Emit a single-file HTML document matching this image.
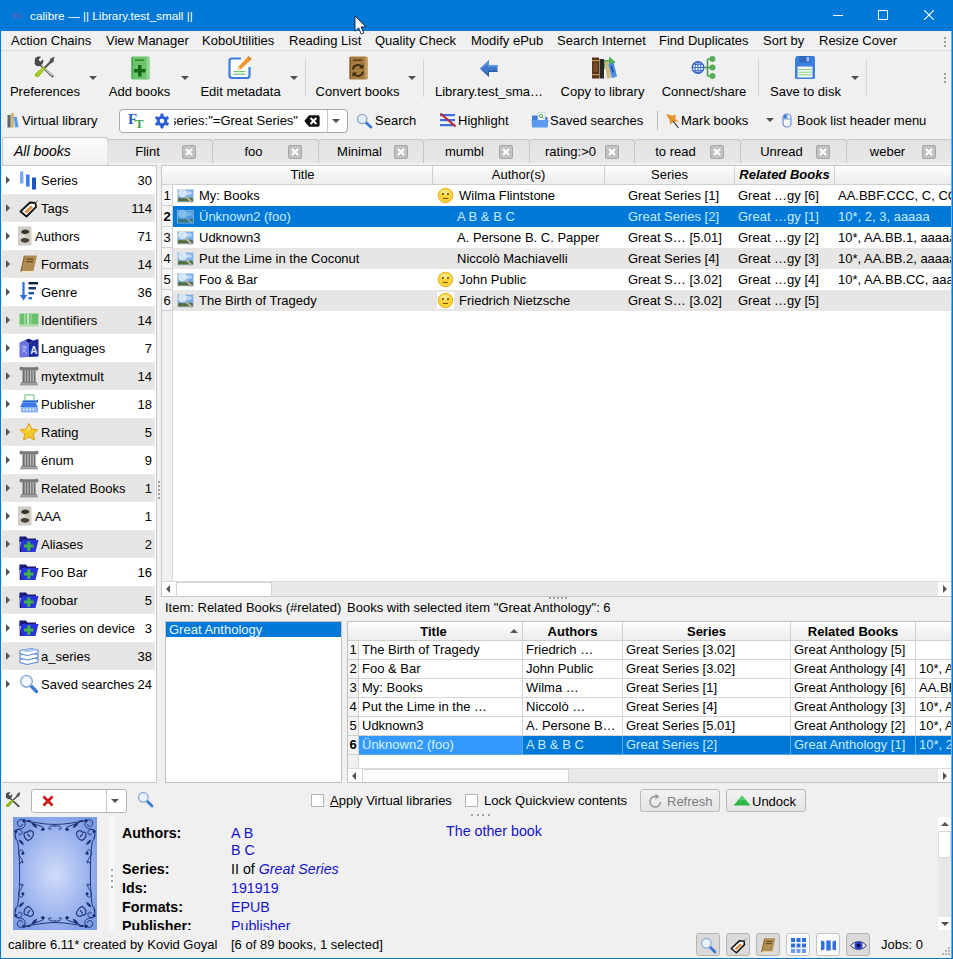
<!DOCTYPE html>
<html><head><meta charset="utf-8"><title>calibre</title>
<style>
*{box-sizing:border-box;margin:0;padding:0}
html,body{width:953px;height:959px;overflow:hidden;background:#f0f0f0}
body{font-family:"Liberation Sans","DejaVu Sans",sans-serif;font-size:13px;color:#000;position:relative}
.a{position:absolute;white-space:nowrap}
.t{position:absolute;white-space:nowrap;line-height:16px;height:16px}
#titlebar{left:0;top:0;width:953px;height:31px;background:#0078d7}
#bl{z-index:50;left:0;top:31px;width:1px;height:928px;background:#0078d7}
#br{z-index:50;left:951px;top:31px;width:2px;height:928px;background:linear-gradient(90deg,#6eb0e6 0 1px,#0078d7 1px 2px)}
#bb{z-index:50;left:0;top:958px;width:953px;height:1px;background:#0078d7}
.dots{width:2px;height:11px;background:repeating-linear-gradient(#a0a0a0 0 2px,transparent 2px 4px)}

.tl{position:absolute;white-space:nowrap;line-height:16px;height:16px;top:84px;text-align:center}
.arr{position:absolute;width:0;height:0;border-left:4px solid transparent;border-right:4px solid transparent;border-top:4px solid #505050}
.vsep{position:absolute;width:1px;background:#d4d4d4}

#sbox{left:119px;top:109px;width:229px;height:24px;background:#fff;border:1px solid #a8a8a8;border-radius:4px}
.tab{position:absolute;top:139px;height:24px;width:106px;background:linear-gradient(#e2e2e2,#e8e8e8);border:1px solid #c6c6c6;border-left:none;border-bottom:none;border-radius:3px 3px 0 0}
.tab .tt{position:absolute;left:6px;width:69px;top:4px;text-align:center;line-height:16px}
.tab .cb{position:absolute;left:75px;top:5px;width:14px;height:14px;background:#c2c2c2;border:1px solid #a6a6a6;border-radius:2px}

#tb{left:2px;top:165px;width:155px;height:618px;background:#fff;border:1px solid #c8c8c8;border-left:none}
.tr{position:absolute;left:0;width:153px;height:28px}
.tr.g{background:#e7e6e4}
.tr .ar{position:absolute;left:4px;top:10px;width:0;height:0;border-top:4px solid transparent;border-bottom:4px solid transparent;border-left:4px solid #555}
.tr .nm{position:absolute;left:39px;top:7px;line-height:16px;white-space:nowrap}
.tr .ct{position:absolute;right:3px;top:7px;line-height:16px}
.tr svg{position:absolute;left:17px;top:4px}

#bl2{left:161px;top:165px;width:791px;height:432px;background:#fff;border:1px solid #c8c8c8;border-right:none;overflow:hidden}
.hd{position:absolute;top:0;height:19px;background:linear-gradient(#ffffff,#f4f4f4 50%,#ececec);border-right:1px solid #d0d0d0;border-bottom:1px solid #d0d0d0;text-align:center;line-height:17px;white-space:nowrap;overflow:hidden}
.br{position:absolute;left:11px;width:779px;height:21px}
.br.g{background:#e7e6e4}
.br.sel{background:#0078d7;color:#c8ecff}
.br span{position:absolute;top:2px;line-height:17px;white-space:nowrap}
.rn{position:absolute;left:0;width:11px;height:21px;background:#f6f6f6;border-right:1px solid #d0d0d0;border-bottom:1px solid #d0d0d0;text-align:center;line-height:21px;font-size:13px;white-space:nowrap}
.pic{position:absolute;left:4px;top:3px}
.sel .pic{opacity:.62}
.emo{position:absolute;left:264px;top:2px;width:17px;height:17px;background:#fff}
.sbb{position:absolute;background:#e8e8e8}
.sbt{position:absolute;background:#fff;border:1px solid #d4d4d4}

#qlist{left:165px;top:621px;width:177px;height:162px;background:#fff;border:1px solid #c0c0c0}
#qtab{left:347px;top:621px;width:605px;height:162px;background:#fff;border:1px solid #c0c0c0;border-right:none;overflow:hidden}
.qh{position:absolute;top:0;height:19px;background:linear-gradient(#ffffff,#f4f4f4 50%,#ececec);border-right:1px solid #cfcfcf;border-bottom:1px solid #cfcfcf;text-align:center;line-height:19px;font-weight:bold;white-space:nowrap}
.qr{position:absolute;left:0;width:604px;height:19px}
.qc{position:absolute;top:0;height:19px;border-right:1px solid #d4d4d4;border-bottom:1px solid #d4d4d4;line-height:18px;padding-left:3px;white-space:nowrap;overflow:hidden}
.qr.sel .qc{background:#0078d7;color:#c8ecff;border-color:#5aa8e8}
.qn{position:absolute;left:0;top:0;width:11px;height:19px;background:#f4f4f4;border-right:1px solid #cfcfcf;border-bottom:1px solid #cfcfcf;text-align:center;line-height:18px}

.cbx{position:absolute;width:13px;height:13px;background:#fff;border:1px solid #b4b4b4}
.btn{position:absolute;height:23px;border:1px solid #b9b9b9;border-radius:3px;background:linear-gradient(#f2f2f2,#e4e4e4)}
.sbtn{position:absolute;top:933px;width:24px;height:23px;border:1px solid #b4b4b4;border-radius:3px;background:#dadada}
.sbtn.w{background:#fbfbfb;border-color:#c4c4c4}
.sbtn svg{position:absolute;left:3px;top:3px}
.dl{position:absolute;left:122px;font-weight:bold;font-size:14.25px;line-height:16px;white-space:nowrap}
.dv{position:absolute;left:231px;font-size:14.25px;line-height:16px;white-space:nowrap;color:#1414c8}
</style></head><body>
<div class="a" id="titlebar">
<svg class="a" style="left:10px;top:9px" width="14" height="13" viewBox="0 0 14 13"><path d="M1 6.5 L6.5 1.5 V4.5 H13 V8.5 H6.5 V11.5 Z" fill="#4a66b8" opacity="0.7"/></svg>
<div class="t" style="left:30px;top:8px;color:#fff;font-size:11.75px">calibre — || Library.test_small ||</div>
<svg class="a" style="left:833px;top:15px" width="10" height="1"><rect width="10" height="1" fill="#fff"/></svg>
<svg class="a" style="left:878px;top:10px" width="10" height="10"><rect x="0.5" y="0.5" width="9" height="9" fill="none" stroke="#fff" stroke-width="1"/></svg>
<svg class="a" style="left:924px;top:10px" width="10" height="10"><path d="M0 0 L10 10 M10 0 L0 10" stroke="#fff" stroke-width="1.1"/></svg>
<svg class="a" style="left:354px;top:15px" width="14" height="21" viewBox="0 0 14 21"><path d="M1 1 V16.2 L4.6 12.9 L7.2 19 L9.8 17.9 L7.2 11.9 H12 Z" fill="#fff" stroke="#0a1a3a" stroke-width="0.9"/></svg>
</div>
<div class="a" id="bl"></div><div class="a" id="br"></div><div class="a" id="bb"></div>
<div class="a" style="left:1px;top:50px;width:950px;height:1px;background:#dcdcdc"></div>
<div class="t" style="left:11px;top:33px">Action Chains</div>
<div class="t" style="left:106px;top:33px">View Manager</div>
<div class="t" style="left:202px;top:33px">KoboUtilities</div>
<div class="t" style="left:289px;top:33px">Reading List</div>
<div class="t" style="left:375px;top:33px">Quality Check</div>
<div class="t" style="left:471px;top:33px">Modify ePub</div>
<div class="t" style="left:557px;top:33px">Search Internet</div>
<div class="t" style="left:659px;top:33px">Find Duplicates</div>
<div class="t" style="left:763px;top:33px">Sort by</div>
<div class="t" style="left:819px;top:33px">Resize Cover</div>
<div class="a dots" style="left:944px;top:37px"></div>

<svg class="a" style="left:32px;top:55px" width="25" height="25" viewBox="0 0 25 25">
<path d="M3 3.5 C4.5 1.5 7.5 1.2 9 2 L6.5 4.8 L8.3 6.8 L11 4.2 C12 6.5 11 8.8 9.5 9.6 L21.5 20.5 C22.5 21.5 21 23.3 19.8 22.3 L8 11 C5.5 12 3.2 10.5 2.6 8.5 Z" fill="#4a4a4a"/>
<path d="M9.5 10 L20.5 21.2" stroke="#d8d8d8" stroke-width="1.2" fill="none"/>
<path d="M22.5 1.5 L18.5 3.5 L16.8 7.2 L11.5 12.5 L13 14 L18.3 8.7 L21.5 7 Z" fill="#555"/>
<path d="M11.8 11.6 L13.8 13.6 L7 21.5 C5 23.5 1.5 21 3.3 18.6 Z" fill="#8fb51a"/>
<path d="M10.8 12.4 L12.8 14.4 L6.6 21 C5 22.3 3 20.8 4 19.2 Z" fill="#a6cc2a"/>
</svg>
<svg class="a" style="left:131px;top:56px" width="19" height="24" viewBox="0 0 19 24">
<path d="M2 0.5 H17 Q18.5 0.5 18.5 2 V22 Q18.5 23.5 17 23.5 H2 Q0.5 23.5 0.5 22 V2 Q0.5 0.5 2 0.5 Z" fill="#6cc56c"/>
<rect x="15.5" y="1" width="3" height="22" fill="#8fd88f"/>
<rect x="0.5" y="1" width="1.5" height="22" fill="#4aa54a"/>
<rect x="4" y="3.5" width="9" height="1.3" fill="#1e7a1e"/>
<path d="M7 9 H10.5 V13 H14.5 V16.5 H10.5 V20.5 H7 V16.5 H3 V13 H7 Z" fill="#156b15"/>
</svg>
<svg class="a" style="left:228px;top:55px" width="25" height="25" viewBox="0 0 25 25">
<path d="M13 3.5 H4 Q1.5 3.5 1.5 6 V20.5 Q1.5 23 4 23 H19 Q21.5 23 21.5 20.5 V12" fill="#fff" stroke="#3a7ce0" stroke-width="2.2"/>
<rect x="5.5" y="16" width="12" height="1.2" fill="#6fc36f"/><rect x="5.5" y="18.7" width="12" height="1.2" fill="#6fc36f"/>
<path d="M20.5 1.2 L23.6 4 L13 14.2 L9.5 15.2 L10.3 11.7 Z" fill="#f0962e"/>
<path d="M9.5 15.2 L10.3 11.7 L13 14.2 Z" fill="#f6d7a8"/>
<path d="M20.5 1.2 L23.6 4 L22.4 5.2 L19.3 2.4 Z" fill="#d67a1a"/>
</svg>
<svg class="a" style="left:349px;top:56px" width="19" height="24" viewBox="0 0 19 24">
<path d="M2 0.5 H17 Q18.5 0.5 18.5 2 V22 Q18.5 23.5 17 23.5 H2 Q0.5 23.5 0.5 22 V2 Q0.5 0.5 2 0.5 Z" fill="#a67c3e"/>
<rect x="15.8" y="1" width="2.7" height="22" fill="#c39a5c"/>
<rect x="0.5" y="1" width="1.5" height="22" fill="#87622c"/>
<rect x="4" y="3.5" width="9" height="1.3" fill="#4a3512"/>
<path d="M4 13.5 A5 5 0 0 1 13 11" fill="none" stroke="#3d2c10" stroke-width="2"/>
<path d="M14.5 8 V12.5 H10 Z" fill="#3d2c10"/>
<path d="M14 15.5 A5 5 0 0 1 5 18" fill="none" stroke="#3d2c10" stroke-width="2"/>
<path d="M3.5 21 V16.5 H8 Z" fill="#3d2c10"/>
</svg>
<svg class="a" style="left:479px;top:59px" width="20" height="19" viewBox="0 0 20 19">
<path d="M1 9.5 L10 1 V6 H18.5 V13 H10 V18 Z" fill="#3f78c8"/>
<path d="M1 9.5 L10 1 V6 H18.5 V8 H9 V5 L3 9.5 Z" fill="#5b93de"/>
<path d="M1 9.5 L10 18 V13 H18.5 V11.5 H9 V15 Z" fill="#2c5fa8"/>
</svg>
<svg class="a" style="left:591px;top:55px" width="26" height="25" viewBox="0 0 26 25">
<path d="M11 5 H18 V1.5 L24.5 7 L18 12.5 V9 H14 V14 H11 Z" fill="#4fb04f"/>
<rect x="1" y="2.5" width="7" height="21" fill="#5a3418"/>
<rect x="1" y="5" width="7" height="1.2" fill="#c89a50"/><rect x="1" y="19" width="7" height="1.2" fill="#c89a50"/>
<rect x="2.2" y="8" width="4.6" height="9" fill="#7a4a22"/>
<rect x="8.5" y="4" width="4.5" height="19.5" fill="#2a2a2a"/>
<path d="M13.5 7 L17.8 6.3 L20.3 22.8 L16 23.5 Z" fill="#cdb98a"/>
<path d="M17.5 9 L22.5 7.3 L26 21.5 L21 23.3 Z" fill="#4a8ee0"/>
<path d="M19.5 11 L21 10.5 L22.8 17 L21.3 17.5 Z" fill="#1d4fa0"/>
</svg>
<svg class="a" style="left:691px;top:55px" width="27" height="25" viewBox="0 0 27 25">
<path d="M12 12.5 H16.5 M16.5 4 V21 M16.5 4 H20 M16.5 12.5 H20 M16.5 21 H20" stroke="#4a9a4a" stroke-width="1.6" fill="none"/>
<circle cx="21.5" cy="4" r="3" fill="#55b055"/><circle cx="21.5" cy="12.5" r="3" fill="#55b055"/><circle cx="21.5" cy="21" r="3" fill="#55b055"/>
<circle cx="7" cy="12.5" r="5.8" fill="#e8f0ff" stroke="#2f62c8" stroke-width="1.4"/>
<path d="M1.2 12.5 H12.8 M7 6.7 V18.3 M2.3 9.3 H11.7 M2.3 15.7 H11.7" stroke="#2f62c8" stroke-width="0.9" fill="none"/>
<ellipse cx="7" cy="12.5" rx="2.8" ry="5.8" fill="none" stroke="#2f62c8" stroke-width="0.9"/>
</svg>
<svg class="a" style="left:794px;top:55px" width="22" height="25" viewBox="0 0 22 25">
<path d="M2.5 1 H19.5 Q21 1 21 2.5 V22.5 Q21 24 19.5 24 H2.5 Q1 24 1 22.5 V4 Z" fill="#3d7fdc"/>
<rect x="5.5" y="1" width="11" height="6.5" fill="#2f68c0"/>
<rect x="12.5" y="2" width="2.6" height="4.3" fill="#9cc2f5"/>
<rect x="3.5" y="11.5" width="15" height="11" fill="#f4f8f4"/>
<rect x="3.5" y="14" width="15" height="1" fill="#8fd08f"/><rect x="3.5" y="16.7" width="15" height="1" fill="#8fd08f"/><rect x="3.5" y="19.4" width="15" height="1" fill="#8fd08f"/>
</svg>
<div class="tl" style="left:1px;width:88px">Preferences</div>
<div class="tl" style="left:99px;width:81px">Add books</div>
<div class="tl" style="left:190px;width:101px">Edit metadata</div>
<div class="tl" style="left:307px;width:101px">Convert books</div>
<div class="tl" style="left:425px;width:128px">Library.test_sma…</div>
<div class="tl" style="left:551px;width:103px">Copy to library</div>
<div class="tl" style="left:652px;width:104px">Connect/share</div>
<div class="tl" style="left:760px;width:91px">Save to disk</div>
<div class="arr" style="left:89px;top:76px"></div>
<div class="arr" style="left:181px;top:76px"></div>
<div class="arr" style="left:290px;top:76px"></div>
<div class="arr" style="left:408px;top:76px"></div>
<div class="arr" style="left:851px;top:76px"></div>
<div class="vsep" style="left:305px;top:59px;height:38px"></div>
<div class="vsep" style="left:423px;top:59px;height:38px"></div>
<div class="vsep" style="left:758px;top:59px;height:38px"></div>
<div class="vsep" style="left:866px;top:59px;height:38px"></div>
<div class="a dots" style="left:944px;top:73px"></div>

<svg class="a" style="left:7px;top:112px" width="12" height="16" viewBox="0 0 12 16"><rect x="0.5" y="3" width="3.2" height="12.5" fill="#5c646c"/><rect x="3.7" y="1" width="3.3" height="14.5" fill="#cdb87e"/><path d="M6.8 5 L9.6 4.4 L11.6 15 L8.2 15.5 Z" fill="#5b9bf0"/></svg>
<div class="t" style="left:22px;top:113px">Virtual library</div>
<div class="a" id="sbox"></div>
<div class="a" style="left:128px;top:111px;font-family:'Liberation Serif',serif;font-size:15px;font-weight:bold;color:#2a60c0;line-height:16px">F</div>
<div class="a" style="left:135px;top:116px;font-family:'Liberation Serif',serif;font-size:13px;font-weight:bold;color:#3fa050;line-height:16px">T</div>
<svg class="a" style="left:154px;top:113px" width="16" height="16" viewBox="0 0 16 16"><g fill="#2d5fd2"><circle cx="8" cy="8" r="5.3"/><g id="gt"><rect x="6.4" y="0.6" width="3.2" height="14.8" rx="0.8"/></g><rect x="6.4" y="0.6" width="3.2" height="14.8" rx="0.8" transform="rotate(60 8 8)"/><rect x="6.4" y="0.6" width="3.2" height="14.8" rx="0.8" transform="rotate(120 8 8)"/></g><circle cx="8" cy="8" r="2.3" fill="#fff"/></svg>
<div class="a" style="left:174px;top:110px;width:125px;height:22px;overflow:hidden"><div class="t" style="right:1px;top:3px">series:"=Great Series"</div></div>
<svg class="a" style="left:304px;top:115px" width="16" height="12" viewBox="0 0 16 12"><path d="M5 0.3 H14 Q15.6 0.3 15.6 2 V10 Q15.6 11.7 14 11.7 H5 L0.3 6 Z" fill="#111"/><path d="M6.6 3 L12.4 9 M12.4 3 L6.6 9" stroke="#fff" stroke-width="2"/></svg>
<div class="a" style="left:327px;top:110px;width:1px;height:22px;background:#c8c8c8"></div>
<div class="arr" style="left:332px;top:119px"></div>
<svg class="a" style="left:356px;top:113px" width="17" height="16" viewBox="0 0 17 16"><path d="M9.5 9 L15 14.2" stroke="#3b78d6" stroke-width="2.6" stroke-linecap="round"/><circle cx="6.2" cy="6" r="4.7" fill="#e4f0fb" stroke="#8fa6c0" stroke-width="1.3"/></svg>
<div class="t" style="left:375px;top:113px">Search</div>
<svg class="a" style="left:439px;top:112px" width="18" height="16" viewBox="0 0 18 16"><rect x="1" y="2" width="15" height="2.2" fill="#3c6fe0"/><rect x="1" y="7" width="15" height="2.2" fill="#3c6fe0"/><rect x="1" y="12" width="15" height="2.2" fill="#3c6fe0"/><path d="M1.5 1.5 L16.5 14.5" stroke="#c0202a" stroke-width="2"/></svg>
<div class="t" style="left:458px;top:113px">Highlight</div>
<svg class="a" style="left:531px;top:112px" width="18" height="16" viewBox="0 0 18 16"><path d="M1 3.5 H6 L7.5 5 H16.5 V15 H1 Z" fill="#3f7fd8"/><rect x="7" y="0.7" width="7" height="7.5" fill="#fff" stroke="#b0c4d8" stroke-width="0.6"/><circle cx="10" cy="3.8" r="1.6" fill="none" stroke="#3a9a3a" stroke-width="0.9"/><path d="M11 5 L12.8 6.8" stroke="#3a9a3a" stroke-width="0.9"/><path d="M0.5 8 H17.5 L16.5 15.5 H1.2 Z" fill="#5a9af0"/></svg>
<div class="t" style="left:550px;top:113px">Saved searches</div>
<div class="vsep" style="left:657px;top:111px;height:19px;background:#b8b8b8"></div>
<svg class="a" style="left:665px;top:113px" width="15" height="16" viewBox="0 0 15 16"><path d="M1 1 L7.5 2.8 L10.8 1.6 L10.2 5.5 L13.5 8.8 L8.5 8.6 L5.2 11.5 L4.6 7.2 Z" fill="#e8922a"/><path d="M8 8.2 L13.5 14.8" stroke="#444" stroke-width="1.2"/></svg>
<div class="t" style="left:681px;top:113px">Mark books</div>
<div class="arr" style="left:766px;top:118px;border-left-width:4px;border-right-width:4px"></div>
<svg class="a" style="left:782px;top:113px" width="10" height="15" viewBox="0 0 10 15"><rect x="1" y="1" width="8" height="13" rx="3.8" fill="#f4f8ff" stroke="#6a8fd0" stroke-width="1.2"/><path d="M1 6 H9 M5 1 V6" stroke="#6a8fd0" stroke-width="0.9"/><rect x="1.6" y="1.6" width="3.2" height="4" rx="1.5" fill="#3b78e0"/></svg>
<div class="t" style="left:797px;top:113px">Book list header menu</div>

<div class="a" style="left:2px;top:137px;width:106px;height:29px;background:linear-gradient(#fbfbfb,#f0f0f0);border:1px solid #c6c6c6;border-bottom:none;border-radius:3px 3px 0 0"></div>
<div class="t" style="left:14px;top:143px;font-style:italic;font-size:14px">All books</div>
<div class="tab" style="left:107px;width:106px"><div class="tt">Flint</div><div class="cb"><svg width="12" height="12" viewBox="0 0 12 12" style="display:block"><path d="M3 3 L9 9 M9 3 L3 9" stroke="#fff" stroke-width="2"/></svg></div></div>
<div class="tab" style="left:213px;width:106px"><div class="tt">foo</div><div class="cb"><svg width="12" height="12" viewBox="0 0 12 12" style="display:block"><path d="M3 3 L9 9 M9 3 L3 9" stroke="#fff" stroke-width="2"/></svg></div></div>
<div class="tab" style="left:319px;width:105px"><div class="tt">Minimal</div><div class="cb"><svg width="12" height="12" viewBox="0 0 12 12" style="display:block"><path d="M3 3 L9 9 M9 3 L3 9" stroke="#fff" stroke-width="2"/></svg></div></div>
<div class="tab" style="left:424px;width:106px"><div class="tt">mumbl</div><div class="cb"><svg width="12" height="12" viewBox="0 0 12 12" style="display:block"><path d="M3 3 L9 9 M9 3 L3 9" stroke="#fff" stroke-width="2"/></svg></div></div>
<div class="tab" style="left:530px;width:105px"><div class="tt">rating:>0</div><div class="cb"><svg width="12" height="12" viewBox="0 0 12 12" style="display:block"><path d="M3 3 L9 9 M9 3 L3 9" stroke="#fff" stroke-width="2"/></svg></div></div>
<div class="tab" style="left:635px;width:106px"><div class="tt">to read</div><div class="cb"><svg width="12" height="12" viewBox="0 0 12 12" style="display:block"><path d="M3 3 L9 9 M9 3 L3 9" stroke="#fff" stroke-width="2"/></svg></div></div>
<div class="tab" style="left:741px;width:106px"><div class="tt">Unread</div><div class="cb"><svg width="12" height="12" viewBox="0 0 12 12" style="display:block"><path d="M3 3 L9 9 M9 3 L3 9" stroke="#fff" stroke-width="2"/></svg></div></div>
<div class="tab" style="left:847px;width:105px"><div class="tt">weber</div><div class="cb"><svg width="12" height="12" viewBox="0 0 12 12" style="display:block"><path d="M3 3 L9 9 M9 3 L3 9" stroke="#fff" stroke-width="2"/></svg></div></div>

<div class="a" id="tb">
<div class="tr" style="top:0px"><div class="ar"></div><svg width="18" height="20" viewBox="0 0 18 20"><rect x="1" y="1.5" width="3.4" height="12" fill="#7aaaf5"/><rect x="7" y="4.5" width="3.6" height="12" fill="#3c7be8"/><rect x="13" y="7.5" width="4" height="12" fill="#1a55c8"/></svg><div class="nm">Series</div><div class="ct">30</div></div>
<div class="tr g" style="top:28px"><div class="ar"></div><svg width="20" height="20" viewBox="0 0 20 20"><path d="M1.5 13.5 L11 4.5 L16.5 5 L17 9 L7.5 18.5 Z" fill="#fff" stroke="#111" stroke-width="1.8" stroke-linejoin="round"/><path d="M5.5 13.5 L12 7.5 L14 9.5 L7.7 15.6 Z" fill="#e08a3c"/><path d="M15.5 5.5 L18.5 2.5" stroke="#555" stroke-width="1"/></svg><div class="nm">Tags</div><div class="ct">114</div></div>
<div class="tr" style="top:56px"><div class="ar"></div><svg width="14" height="20" viewBox="0 0 14 20" style="left:16px"><rect x="0" y="0.5" width="13.5" height="19" fill="#cfcbc6"/><path d="M3 6 C4 2.5 11 2.5 11.5 6 C10 8.5 4.5 9 3 6 Z" fill="#3a352e"/><path d="M2.5 14 C4 11 10 11.5 11.5 14 C10 17.5 4 17.5 2.5 14 Z" fill="#4a4236"/><path d="M1 9 H6 V12 H1 Z" fill="#e0ddd8"/></svg><div class="nm" style="left:33px">Authors</div><div class="ct">71</div></div>
<div class="tr g" style="top:84px"><div class="ar"></div><svg width="20" height="20" viewBox="0 0 20 20"><path d="M5 1.5 H18 L14.5 17 H1.5 Z" fill="#b08d52"/><path d="M1.5 17 H14.5 L14.2 18.8 H1.8 Z" fill="#efe4c8"/><path d="M5 1.5 L1.5 17 L2.3 18.8 L5.8 3 Z" fill="#8a6a34"/><rect x="7.5" y="4.5" width="7" height="1.3" fill="#6a4e20"/><rect x="7" y="7" width="7" height="1.3" fill="#6a4e20"/></svg><div class="nm">Formats</div><div class="ct">14</div></div>
<div class="tr" style="top:112px"><div class="ar"></div><svg width="20" height="22" viewBox="0 0 20 22" style="top:3px"><path d="M4.5 1 V17" stroke="#2d6be0" stroke-width="2.2"/><path d="M0.8 14 L4.5 19.5 L8.2 14 Z" fill="#2d6be0"/><rect x="9.5" y="1" width="9.5" height="2.4" fill="#0e1e40"/><rect x="9.5" y="6" width="7.5" height="2.4" fill="#14306a"/><rect x="9.5" y="11" width="5.5" height="2.4" fill="#1c4cb0"/><rect x="9.5" y="16" width="3.5" height="2.4" fill="#2d6be0"/></svg><div class="nm">Genre</div><div class="ct">36</div></div>
<div class="tr g" style="top:140px"><div class="ar"></div><svg width="20" height="20" viewBox="0 0 20 20"><rect x="0.5" y="3.5" width="19" height="11" fill="#6cc06c"/><rect x="5.5" y="3.5" width="0.8" height="11" fill="#d8f0d8"/><rect x="8.2" y="3.5" width="1.6" height="11" fill="#d8f0d8"/><rect x="11.5" y="3.5" width="0.8" height="11" fill="#b8e4b8"/><rect x="0.5" y="14.5" width="19" height="2" fill="#a8dca8"/></svg><div class="nm">Identifiers</div><div class="ct">14</div></div>
<div class="tr" style="top:168px"><div class="ar"></div><svg width="20" height="20" viewBox="0 0 20 20"><path d="M0.5 4.5 L6 2 L10 5.5 V19 L0.5 19.5 Z" fill="#6a74e0"/><path d="M10 5.5 L14 2.5 L19.5 1 V18.5 L10 19 Z" fill="#1a2a9a"/><path d="M6 2 L10 5.5 L14 2.5 L10 0.8 Z" fill="#0e1870"/><text x="11.3" y="15.5" font-family="Liberation Sans,sans-serif" font-size="10" font-weight="bold" fill="#dfe6ff">A</text><path d="M2.5 9 H7.5 M5 7.5 V9 M3 14.5 C5 13 6.5 11 7 9 M3.5 10.5 C4.5 12.5 6 14 8 14.8" stroke="#c8d0ff" stroke-width="0.9" fill="none"/></svg><div class="nm">Languages</div><div class="ct">7</div></div>
<div class="tr g" style="top:196px"><div class="ar"></div><svg width="20" height="20" viewBox="0 0 20 20"><path d="M0.5 2.5 C0.5 0.5 3 0.5 4 1.2 H16 C17 0.5 19.5 0.5 19.5 2.5 C19.5 4.5 17.5 4.8 16.5 4.3 H3.5 C2.5 4.8 0.5 4.5 0.5 2.5 Z" fill="#7a7a7a"/><rect x="3.5" y="4.3" width="13" height="11.7" fill="#6c6c6c"/><rect x="5.6" y="4.8" width="1.2" height="11" fill="#c4c4c4"/><rect x="8.3" y="4.8" width="1.2" height="11" fill="#c4c4c4"/><rect x="11" y="4.8" width="1.2" height="11" fill="#c4c4c4"/><rect x="13.6" y="4.8" width="1.2" height="11" fill="#c4c4c4"/><rect x="2" y="16" width="16" height="1.6" fill="#808080"/><rect x="1" y="17.6" width="18" height="1.8" fill="#9a9a9a"/></svg><div class="nm">mytextmult</div><div class="ct">14</div></div>
<div class="tr" style="top:224px"><div class="ar"></div><svg width="20" height="20" viewBox="0 0 20 20"><rect x="6" y="1" width="9" height="6" fill="#fff" stroke="#6cc06c" stroke-width="1"/><path d="M4 6.5 H17 L19 5.5 V8.5 H3 Z" fill="#2c62d8"/><path d="M3.5 8.5 H16.5 L19 13 H1 Z" fill="#3c78ea"/><rect x="2" y="13" width="17" height="5.5" rx="1" fill="#8ab4f8"/><path d="M4 15.5 H17" stroke="#fff" stroke-width="1.6" stroke-dasharray="1.6 1.6"/></svg><div class="nm">Publisher</div><div class="ct">18</div></div>
<div class="tr g" style="top:252px"><div class="ar"></div><svg width="20" height="20" viewBox="0 0 20 20"><path d="M10 1.5 L12.7 7 L18.8 7.8 L14.3 12 L15.5 18 L10 15 L4.5 18 L5.7 12 L1.2 7.8 L7.3 7 Z" fill="#f6c928" stroke="#e0a010" stroke-width="1" stroke-linejoin="round"/><path d="M10 3.5 L11.8 8 L7 8.3 Z" fill="#fbe88a"/></svg><div class="nm">Rating</div><div class="ct">5</div></div>
<div class="tr" style="top:280px"><div class="ar"></div><svg width="20" height="20" viewBox="0 0 20 20"><path d="M0.5 2.5 C0.5 0.5 3 0.5 4 1.2 H16 C17 0.5 19.5 0.5 19.5 2.5 C19.5 4.5 17.5 4.8 16.5 4.3 H3.5 C2.5 4.8 0.5 4.5 0.5 2.5 Z" fill="#7a7a7a"/><rect x="3.5" y="4.3" width="13" height="11.7" fill="#6c6c6c"/><rect x="5.6" y="4.8" width="1.2" height="11" fill="#c4c4c4"/><rect x="8.3" y="4.8" width="1.2" height="11" fill="#c4c4c4"/><rect x="11" y="4.8" width="1.2" height="11" fill="#c4c4c4"/><rect x="13.6" y="4.8" width="1.2" height="11" fill="#c4c4c4"/><rect x="2" y="16" width="16" height="1.6" fill="#808080"/><rect x="1" y="17.6" width="18" height="1.8" fill="#9a9a9a"/></svg><div class="nm">énum</div><div class="ct">9</div></div>
<div class="tr g" style="top:308px"><div class="ar"></div><svg width="20" height="20" viewBox="0 0 20 20"><path d="M0.5 2.5 C0.5 0.5 3 0.5 4 1.2 H16 C17 0.5 19.5 0.5 19.5 2.5 C19.5 4.5 17.5 4.8 16.5 4.3 H3.5 C2.5 4.8 0.5 4.5 0.5 2.5 Z" fill="#7a7a7a"/><rect x="3.5" y="4.3" width="13" height="11.7" fill="#6c6c6c"/><rect x="5.6" y="4.8" width="1.2" height="11" fill="#c4c4c4"/><rect x="8.3" y="4.8" width="1.2" height="11" fill="#c4c4c4"/><rect x="11" y="4.8" width="1.2" height="11" fill="#c4c4c4"/><rect x="13.6" y="4.8" width="1.2" height="11" fill="#c4c4c4"/><rect x="2" y="16" width="16" height="1.6" fill="#808080"/><rect x="1" y="17.6" width="18" height="1.8" fill="#9a9a9a"/></svg><div class="nm">Related Books</div><div class="ct">1</div></div>
<div class="tr" style="top:336px"><div class="ar"></div><svg width="14" height="20" viewBox="0 0 14 20" style="left:16px"><rect x="0" y="0.5" width="13.5" height="19" fill="#cfcbc6"/><path d="M3 6 C4 2.5 11 2.5 11.5 6 C10 8.5 4.5 9 3 6 Z" fill="#3a352e"/><path d="M2.5 14 C4 11 10 11.5 11.5 14 C10 17.5 4 17.5 2.5 14 Z" fill="#4a4236"/><path d="M1 9 H6 V12 H1 Z" fill="#e0ddd8"/></svg><div class="nm" style="left:33px">AAA</div><div class="ct">1</div></div>
<div class="tr g" style="top:364px"><div class="ar"></div><svg width="20" height="20" viewBox="0 0 20 20"><path d="M0.5 2.5 H7 L8.5 4.5 H17 V8 H0.5 Z" fill="#161a78"/><path d="M2.5 6 H19.5 L16.5 18 H0.8 Z" fill="#2a34d8"/><path d="M0.5 3 L2.5 18 H0.8 Z" fill="#161a78"/><path d="M8.3 7.5 H11.3 V10.5 H14.5 V13.5 H11.3 V17 H8.3 V13.5 H5 V10.5 H8.3 Z" fill="#3cb44a"/></svg><div class="nm">Aliases</div><div class="ct">2</div></div>
<div class="tr" style="top:392px"><div class="ar"></div><svg width="20" height="20" viewBox="0 0 20 20"><path d="M0.5 2.5 H7 L8.5 4.5 H17 V8 H0.5 Z" fill="#161a78"/><path d="M2.5 6 H19.5 L16.5 18 H0.8 Z" fill="#2a34d8"/><path d="M0.5 3 L2.5 18 H0.8 Z" fill="#161a78"/><path d="M8.3 7.5 H11.3 V10.5 H14.5 V13.5 H11.3 V17 H8.3 V13.5 H5 V10.5 H8.3 Z" fill="#3cb44a"/></svg><div class="nm">Foo Bar</div><div class="ct">16</div></div>
<div class="tr g" style="top:420px"><div class="ar"></div><svg width="20" height="20" viewBox="0 0 20 20"><path d="M0.5 2.5 H7 L8.5 4.5 H17 V8 H0.5 Z" fill="#161a78"/><path d="M2.5 6 H19.5 L16.5 18 H0.8 Z" fill="#2a34d8"/><path d="M0.5 3 L2.5 18 H0.8 Z" fill="#161a78"/><path d="M8.3 7.5 H11.3 V10.5 H14.5 V13.5 H11.3 V17 H8.3 V13.5 H5 V10.5 H8.3 Z" fill="#3cb44a"/></svg><div class="nm">foobar</div><div class="ct">5</div></div>
<div class="tr" style="top:448px"><div class="ar"></div><svg width="20" height="20" viewBox="0 0 20 20"><path d="M0.5 2.5 H7 L8.5 4.5 H17 V8 H0.5 Z" fill="#161a78"/><path d="M2.5 6 H19.5 L16.5 18 H0.8 Z" fill="#2a34d8"/><path d="M0.5 3 L2.5 18 H0.8 Z" fill="#161a78"/><path d="M8.3 7.5 H11.3 V10.5 H14.5 V13.5 H11.3 V17 H8.3 V13.5 H5 V10.5 H8.3 Z" fill="#3cb44a"/></svg><div class="nm">series on device</div><div class="ct">3</div></div>
<div class="tr g" style="top:476px"><div class="ar"></div><svg width="20" height="20" viewBox="0 0 20 20"><g fill="#fff" stroke="#5a8ad8" stroke-width="1.1"><path d="M1 13.5 L12 11.5 L19 13 V16 L8 18.5 L1 16.5 Z"/><path d="M1 9 L12 7 L19 8.5 V11.5 L8 14 L1 12 Z"/><path d="M1 4.5 L12 2.5 L19 4 V7 L8 9.5 L1 7.5 Z"/></g><path d="M1 4.5 L12 2.5 L19 4 L8 6.3 Z" fill="#a8c4f0"/></svg><div class="nm">a_series</div><div class="ct">38</div></div>
<div class="tr" style="top:504px"><div class="ar"></div><svg width="20" height="20" viewBox="0 0 20 20"><path d="M11.5 11.5 L17.5 17.5" stroke="#3b78d6" stroke-width="3.2" stroke-linecap="round"/><circle cx="7.5" cy="7.3" r="5.8" fill="#f2f8fe" stroke="#8fb0d8" stroke-width="1.6"/></svg><div class="nm">Saved searches</div><div class="ct">24</div></div>
</div>
<div class="a dots" style="left:158px;top:481px;height:19px"></div>

<div class="a" id="bl2">
<div class="a" style="left:0;top:19px;width:11px;height:412px;background:#f0f0f0;border-right:1px solid #d8d8d8"></div>
<div class="hd" style="left:0px;width:11px;border-right:none"></div>
<div class="hd" style="left:11px;width:260px">Title</div>
<div class="hd" style="left:271px;width:172px">Author(s)</div>
<div class="hd" style="left:443px;width:130px">Series</div>
<div class="hd" style="left:573px;width:100px"><b><i>Related Books</i></b></div>
<div class="hd" style="left:673px;width:130px"></div>
<div class="rn" style="top:19px">1</div><div class="br" style="top:19px"><svg class="pic" width="17" height="16" viewBox="0 0 17 16"><rect x="0.5" y="1.5" width="16" height="12.5" fill="#78b0ec" stroke="#c4d0dc" stroke-width="1"/><path d="M1 10.5 C4 9 7 11 10 10 S14 9.5 16 10.5 V13.5 H1 Z" fill="#566e3c"/><ellipse cx="10" cy="5" rx="5" ry="2" fill="#b8d8f8"/><path d="M8.5 8 L15 14.5" stroke="#b8b4ac" stroke-width="1.8"/><circle cx="5.5" cy="5" r="3.8" fill="#dcecfc" fill-opacity="0.85" stroke="#e4e8ec" stroke-width="1"/></svg><span style="left:26px">My: Books</span><div class="emo"><svg width="17" height="17" viewBox="0 0 17 17"><circle cx="8.5" cy="8.5" r="7.3" fill="#fbd43a" stroke="#e0a818" stroke-width="0.9"/><ellipse cx="8" cy="5.5" rx="4.5" ry="2.8" fill="#fde98a" opacity="0.8"/><circle cx="6" cy="7" r="1" fill="#5a3c08"/><circle cx="11" cy="7" r="1" fill="#5a3c08"/><path d="M5.8 11.5 H11.2" stroke="#7a5210" stroke-width="1"/></svg></div><span style="left:286px">Wilma Flintstone</span><span style="left:455px">Great Series [1]</span><span style="left:565px">Great …gy [6]</span><span style="left:665px">AA.BBF.CCC, C, CC</span></div>
<div class="rn" style="top:40px;font-weight:bold">2</div><div class="br sel" style="top:40px"><svg class="pic" width="17" height="16" viewBox="0 0 17 16"><rect x="0.5" y="1.5" width="16" height="12.5" fill="#78b0ec" stroke="#c4d0dc" stroke-width="1"/><path d="M1 10.5 C4 9 7 11 10 10 S14 9.5 16 10.5 V13.5 H1 Z" fill="#566e3c"/><ellipse cx="10" cy="5" rx="5" ry="2" fill="#b8d8f8"/><path d="M8.5 8 L15 14.5" stroke="#b8b4ac" stroke-width="1.8"/><circle cx="5.5" cy="5" r="3.8" fill="#dcecfc" fill-opacity="0.85" stroke="#e4e8ec" stroke-width="1"/></svg><span style="left:26px">Ünknown2 (foo)</span><span style="left:284px">A B &amp; B C</span><span style="left:455px">Great Series [2]</span><span style="left:565px">Great …gy [1]</span><span style="left:665px">10*, 2, 3, aaaaa</span></div>
<div class="rn" style="top:61px">3</div><div class="br" style="top:61px"><svg class="pic" width="17" height="16" viewBox="0 0 17 16"><rect x="0.5" y="1.5" width="16" height="12.5" fill="#78b0ec" stroke="#c4d0dc" stroke-width="1"/><path d="M1 10.5 C4 9 7 11 10 10 S14 9.5 16 10.5 V13.5 H1 Z" fill="#566e3c"/><ellipse cx="10" cy="5" rx="5" ry="2" fill="#b8d8f8"/><path d="M8.5 8 L15 14.5" stroke="#b8b4ac" stroke-width="1.8"/><circle cx="5.5" cy="5" r="3.8" fill="#dcecfc" fill-opacity="0.85" stroke="#e4e8ec" stroke-width="1"/></svg><span style="left:26px">Udknown3</span><span style="left:284px">A. Persone B. C. Papper</span><span style="left:455px">Great S… [5.01]</span><span style="left:565px">Great …gy [2]</span><span style="left:665px">10*, AA.BB.1, aaaaa</span></div>
<div class="rn" style="top:82px">4</div><div class="br g" style="top:82px"><svg class="pic" width="17" height="16" viewBox="0 0 17 16"><rect x="0.5" y="1.5" width="16" height="12.5" fill="#78b0ec" stroke="#c4d0dc" stroke-width="1"/><path d="M1 10.5 C4 9 7 11 10 10 S14 9.5 16 10.5 V13.5 H1 Z" fill="#566e3c"/><ellipse cx="10" cy="5" rx="5" ry="2" fill="#b8d8f8"/><path d="M8.5 8 L15 14.5" stroke="#b8b4ac" stroke-width="1.8"/><circle cx="5.5" cy="5" r="3.8" fill="#dcecfc" fill-opacity="0.85" stroke="#e4e8ec" stroke-width="1"/></svg><span style="left:26px">Put the Lime in the Coconut</span><span style="left:284px">Niccolò Machiavelli</span><span style="left:455px">Great Series [4]</span><span style="left:565px">Great …gy [3]</span><span style="left:665px">10*, AA.BB.2, aaaaa</span></div>
<div class="rn" style="top:103px">5</div><div class="br" style="top:103px"><svg class="pic" width="17" height="16" viewBox="0 0 17 16"><rect x="0.5" y="1.5" width="16" height="12.5" fill="#78b0ec" stroke="#c4d0dc" stroke-width="1"/><path d="M1 10.5 C4 9 7 11 10 10 S14 9.5 16 10.5 V13.5 H1 Z" fill="#566e3c"/><ellipse cx="10" cy="5" rx="5" ry="2" fill="#b8d8f8"/><path d="M8.5 8 L15 14.5" stroke="#b8b4ac" stroke-width="1.8"/><circle cx="5.5" cy="5" r="3.8" fill="#dcecfc" fill-opacity="0.85" stroke="#e4e8ec" stroke-width="1"/></svg><span style="left:26px">Foo &amp; Bar</span><div class="emo"><svg width="17" height="17" viewBox="0 0 17 17"><circle cx="8.5" cy="8.5" r="7.3" fill="#fbd43a" stroke="#e0a818" stroke-width="0.9"/><ellipse cx="8" cy="5.5" rx="4.5" ry="2.8" fill="#fde98a" opacity="0.8"/><circle cx="6" cy="7" r="1" fill="#5a3c08"/><circle cx="11" cy="7" r="1" fill="#5a3c08"/><path d="M5.8 11.5 H11.2" stroke="#7a5210" stroke-width="1"/></svg></div><span style="left:286px">John Public</span><span style="left:455px">Great S… [3.02]</span><span style="left:565px">Great …gy [4]</span><span style="left:665px">10*, AA.BB.CC, aaaaa</span></div>
<div class="rn" style="top:124px">6</div><div class="br g" style="top:124px"><svg class="pic" width="17" height="16" viewBox="0 0 17 16"><rect x="0.5" y="1.5" width="16" height="12.5" fill="#78b0ec" stroke="#c4d0dc" stroke-width="1"/><path d="M1 10.5 C4 9 7 11 10 10 S14 9.5 16 10.5 V13.5 H1 Z" fill="#566e3c"/><ellipse cx="10" cy="5" rx="5" ry="2" fill="#b8d8f8"/><path d="M8.5 8 L15 14.5" stroke="#b8b4ac" stroke-width="1.8"/><circle cx="5.5" cy="5" r="3.8" fill="#dcecfc" fill-opacity="0.85" stroke="#e4e8ec" stroke-width="1"/></svg><span style="left:26px">The Birth of Tragedy</span><div class="emo"><svg width="17" height="17" viewBox="0 0 17 17"><circle cx="8.5" cy="8.5" r="7.3" fill="#fbd43a" stroke="#e0a818" stroke-width="0.9"/><ellipse cx="8" cy="5.5" rx="4.5" ry="2.8" fill="#fde98a" opacity="0.8"/><circle cx="6" cy="7" r="1" fill="#5a3c08"/><circle cx="11" cy="7" r="1" fill="#5a3c08"/><path d="M5.8 11.5 H11.2" stroke="#7a5210" stroke-width="1"/></svg></div><span style="left:286px">Friedrich Nietzsche</span><span style="left:455px">Great S… [3.02]</span><span style="left:565px">Great …gy [5]</span><span style="left:665px"></span></div>
<div class="sbb" style="left:0;top:415px;width:790px;height:16px;border-top:1px solid #dcdcdc"></div>
<div class="sbt" style="left:14px;top:416px;width:96px;height:15px"></div>
<div class="a" style="left:0;top:416px;width:14px;height:15px;background:#fff"></div><div class="a" style="left:4px;top:419px;width:0;height:0;border-top:4px solid transparent;border-bottom:4px solid transparent;border-right:4px solid #555"></div>
<div class="a" style="left:776px;top:416px;width:14px;height:15px;background:#fff"></div><div class="a" style="left:781px;top:419px;width:0;height:0;border-top:4px solid transparent;border-bottom:4px solid transparent;border-left:4px solid #555"></div>
</div>
<div class="a" style="left:549px;top:597px;width:19px;height:2px;background:repeating-linear-gradient(90deg,#a0a0a0 0 2px,transparent 2px 4px)"></div>

<div class="t" style="left:165px;top:600px">Item: Related Books (#related)</div>
<div class="t" style="left:347px;top:600px">Books with selected item "Great Anthology": 6</div>
<div class="a" id="qlist"><div class="a" style="left:0;top:0;width:175px;height:15px;background:#0078d7;color:#e8f6ff;line-height:15px;padding-left:3px">Great Anthology</div></div>
<div class="a" id="qtab">
<div class="qh" style="left:0px;width:11px;border-right:none"></div>
<div class="qh" style="left:11px;width:164px;padding-right:14px">Title</div>
<div class="qh" style="left:175px;width:100px">Authors</div>
<div class="qh" style="left:275px;width:168px">Series</div>
<div class="qh" style="left:443px;width:125px">Related Books</div>
<div class="qh" style="left:568px;width:100px"></div>
<div class="a" style="left:162px;top:7px;width:0;height:0;border-left:4px solid transparent;border-right:4px solid transparent;border-bottom:4px solid #555"></div>
<div class="a" style="left:0;top:19px;width:11px;height:142px;background:#f0f0f0;border-right:1px solid #d8d8d8"></div>
<div class="qr" style="top:19px"><div class="qn">1</div><div class="qc" style="left:11px;width:164px">The Birth of Tragedy</div><div class="qc" style="left:175px;width:100px">Friedrich …</div><div class="qc" style="left:275px;width:168px">Great Series [3.02]</div><div class="qc" style="left:443px;width:125px">Great Anthology [5]</div><div class="qc" style="left:568px;width:100px"></div></div>
<div class="qr" style="top:38px"><div class="qn">2</div><div class="qc" style="left:11px;width:164px">Foo &amp; Bar</div><div class="qc" style="left:175px;width:100px">John Public</div><div class="qc" style="left:275px;width:168px">Great Series [3.02]</div><div class="qc" style="left:443px;width:125px">Great Anthology [4]</div><div class="qc" style="left:568px;width:100px">10*, AA</div></div>
<div class="qr" style="top:57px"><div class="qn">3</div><div class="qc" style="left:11px;width:164px">My: Books</div><div class="qc" style="left:175px;width:100px">Wilma …</div><div class="qc" style="left:275px;width:168px">Great Series [1]</div><div class="qc" style="left:443px;width:125px">Great Anthology [6]</div><div class="qc" style="left:568px;width:100px">AA.BBF</div></div>
<div class="qr" style="top:76px"><div class="qn">4</div><div class="qc" style="left:11px;width:164px">Put the Lime in the …</div><div class="qc" style="left:175px;width:100px">Niccolò …</div><div class="qc" style="left:275px;width:168px">Great Series [4]</div><div class="qc" style="left:443px;width:125px">Great Anthology [3]</div><div class="qc" style="left:568px;width:100px">10*, AA</div></div>
<div class="qr" style="top:95px"><div class="qn">5</div><div class="qc" style="left:11px;width:164px">Udknown3</div><div class="qc" style="left:175px;width:100px">A. Persone B…</div><div class="qc" style="left:275px;width:168px">Great Series [5.01]</div><div class="qc" style="left:443px;width:125px">Great Anthology [2]</div><div class="qc" style="left:568px;width:100px">10*, AA</div></div>
<div class="qr sel" style="top:114px"><div class="qn" style="font-weight:bold">6</div><div class="qc" style="left:11px;width:164px;background:#3399ff;color:#d8f4ff">Ünknown2 (foo)</div><div class="qc" style="left:175px;width:100px">A B &amp; B C</div><div class="qc" style="left:275px;width:168px">Great Series [2]</div><div class="qc" style="left:443px;width:125px">Great Anthology [1]</div><div class="qc" style="left:568px;width:100px">10*, 2, 3</div></div>
<div class="sbb" style="left:0;top:146px;width:604px;height:15px;border-top:1px solid #dcdcdc"></div>
<div class="sbt" style="left:14px;top:147px;width:207px;height:14px"></div>
<div class="a" style="left:0;top:147px;width:14px;height:14px;background:#fff"></div><div class="a" style="left:4px;top:150px;width:0;height:0;border-top:4px solid transparent;border-bottom:4px solid transparent;border-right:4px solid #555"></div>
<div class="a" style="left:590px;top:147px;width:14px;height:14px;background:#fff"></div><div class="a" style="left:595px;top:150px;width:0;height:0;border-top:4px solid transparent;border-bottom:4px solid transparent;border-left:4px solid #555"></div>
</div>

<svg class="a" style="left:4px;top:791px" width="18" height="18" viewBox="0 0 25 25">
<path d="M3 3.5 C4.5 1.5 7.5 1.2 9 2 L6.5 4.8 L8.3 6.8 L11 4.2 C12 6.5 11 8.8 9.5 9.6 L21.5 20.5 C22.5 21.5 21 23.3 19.8 22.3 L8 11 C5.5 12 3.2 10.5 2.6 8.5 Z" fill="#4a4a4a"/>
<path d="M22.5 1.5 L18.5 3.5 L16.8 7.2 L11.5 12.5 L13 14 L18.3 8.7 L21.5 7 Z" fill="#555"/>
<path d="M11.8 11.6 L13.8 13.6 L7 21.5 C5 23.5 1.5 21 3.3 18.6 Z" fill="#8fb51a"/></svg>
<div class="a" style="left:31px;top:789px;width:96px;height:24px;background:#fff;border:1px solid #b4b4b4;border-radius:3px"></div>
<svg class="a" style="left:42px;top:795px" width="12" height="12" viewBox="0 0 12 12"><path d="M1.5 1.5 L10.5 10.5 M10.5 1.5 L1.5 10.5" stroke="#c81414" stroke-width="2.6"/></svg>
<div class="a" style="left:106px;top:790px;width:1px;height:22px;background:#c8c8c8"></div>
<div class="arr" style="left:111px;top:799px"></div>
<svg class="a" style="left:137px;top:791px" width="17" height="17" viewBox="0 0 17 17"><path d="M9.5 9.5 L15 15" stroke="#3b78d6" stroke-width="2.8" stroke-linecap="round"/><circle cx="6.3" cy="6.3" r="4.8" fill="#e8f2fc" stroke="#8fb0d8" stroke-width="1.4"/></svg>
<div class="cbx" style="left:311px;top:794px"></div>
<div class="t" style="left:330px;top:793px"><u>A</u>pply Virtual libraries</div>
<div class="cbx" style="left:465px;top:794px"></div>
<div class="t" style="left:484px;top:793px">Lock Quickview contents</div>
<div class="btn" style="left:640px;top:789px;width:80px"></div>
<svg class="a" style="left:648px;top:793px" width="15" height="16" viewBox="0 0 15 16"><path d="M12.5 9 A5.3 5.3 0 1 1 8.5 3.6" fill="none" stroke="#9a9a9a" stroke-width="1.6"/><path d="M7.5 0.8 L11.5 3.6 L7.5 6.4 Z" fill="#9a9a9a"/></svg>
<div class="t" style="left:667px;top:794px;color:#7c7c7c">Refresh</div>
<div class="btn" style="left:726px;top:789px;width:80px"></div>
<svg class="a" style="left:733px;top:795px" width="18" height="11" viewBox="0 0 18 11"><path d="M9 0.5 L17.5 10.5 H0.5 Z" fill="#2fb84a"/><path d="M9 0.5 L13 5.2 H5 Z" fill="#5fd878" opacity="0.7"/></svg>
<div class="t" style="left:752px;top:794px">Undock</div>
<div class="a" style="left:471px;top:814px;width:19px;height:2px;background:repeating-linear-gradient(90deg,#a0a0a0 0 2px,transparent 2px 5.6px)"></div>

<svg class="a" style="left:13px;top:817px" width="84" height="113" viewBox="0 0 84 113">
<defs><radialGradient id="cg" cx="50%" cy="51%" r="60%"><stop offset="0" stop-color="#d0dbf8"/><stop offset="0.5" stop-color="#a9bdf0"/><stop offset="1" stop-color="#7d9ce6"/></radialGradient>
</defs>
<rect width="84" height="113" fill="url(#cg)"/>
<g fill="none" stroke="#22367a" stroke-width="1" stroke-linecap="round">
<path d="M13 4.2 C22 5.2 30 7.4 42 7.4"/>
<path d="M17.5 5.5 C23 8 27.5 8.5 29.8 10.2 C32.8 12.5 29.5 15 28.3 12.6"/>
<path d="M42 9 C39.5 8.6 36.5 9 35.8 10.8 C35.3 12.6 38.2 13 38 11.4"/>
<path d="M11 3.8 C7.5 0.8 3.2 3.8 4.6 7.6 C5.6 10.2 9.6 10.2 9.4 7.4"/>
<path d="M11.5 4.5 C13.5 8 11 11.5 7.5 11.8 C3.5 12 1.5 15 2.8 14.4"/>
<path d="M2.8 14.4 C0.8 18 3 22 4.8 25 C6.2 34 6.6 45 6.6 56.5" />
<path d="M4 12.5 C7 11.5 9.8 13.8 8.8 16.6 C8 18.6 5.4 18.2 5.8 16.4"/>
<path d="M15.4 23.6 C9.6 20.6 9.8 13.6 14.6 15.4 C15.6 12.4 21.6 13.4 20.2 18.4 C19.4 20.8 17.2 22.6 15.4 23.6 Z" stroke-width="1.2"/>
<path d="M9.9 36.2 C12.2 33.4 6.4 30.8 5.6 35.6 C5.2 39.6 8.8 40.6 9.2 43.2"/>
<path d="M6.6 47 C7.2 44.4 10.4 43.4 10.2 45 C10 46.4 8.4 46 8.6 45"/>
<g fill="#1c2e6c" stroke="none">
<circle cx="11" cy="3.8" r="1.7"/><circle cx="2.8" cy="14.4" r="1.6"/><circle cx="29.9" cy="12.2" r="1.5"/><circle cx="9.9" cy="36.2" r="1.5"/>
<circle cx="15" cy="17.6" r="0.9"/><circle cx="16.4" cy="19.2" r="0.9"/>
<path d="M18.5 5.6 Q23.2 6.6 24.2 11.2 Q19.6 10 18.5 5.6 Z"/><path d="M5.6 22.6 Q10 23.6 11 28 Q6.6 27 5.6 22.6 Z"/>
<path d="M13.2 3.6 Q16 2.4 18.6 4 Q15.6 5.2 13.2 3.6 Z"/><path d="M2.2 17.6 Q1.2 20.6 3 23 Q4 20 2.2 17.6 Z"/>
</g></g><g transform="translate(84 0) scale(-1 1)"><g fill="none" stroke="#22367a" stroke-width="1" stroke-linecap="round">
<path d="M13 4.2 C22 5.2 30 7.4 42 7.4"/>
<path d="M17.5 5.5 C23 8 27.5 8.5 29.8 10.2 C32.8 12.5 29.5 15 28.3 12.6"/>
<path d="M42 9 C39.5 8.6 36.5 9 35.8 10.8 C35.3 12.6 38.2 13 38 11.4"/>
<path d="M11 3.8 C7.5 0.8 3.2 3.8 4.6 7.6 C5.6 10.2 9.6 10.2 9.4 7.4"/>
<path d="M11.5 4.5 C13.5 8 11 11.5 7.5 11.8 C3.5 12 1.5 15 2.8 14.4"/>
<path d="M2.8 14.4 C0.8 18 3 22 4.8 25 C6.2 34 6.6 45 6.6 56.5" />
<path d="M4 12.5 C7 11.5 9.8 13.8 8.8 16.6 C8 18.6 5.4 18.2 5.8 16.4"/>
<path d="M15.4 23.6 C9.6 20.6 9.8 13.6 14.6 15.4 C15.6 12.4 21.6 13.4 20.2 18.4 C19.4 20.8 17.2 22.6 15.4 23.6 Z" stroke-width="1.2"/>
<path d="M9.9 36.2 C12.2 33.4 6.4 30.8 5.6 35.6 C5.2 39.6 8.8 40.6 9.2 43.2"/>
<path d="M6.6 47 C7.2 44.4 10.4 43.4 10.2 45 C10 46.4 8.4 46 8.6 45"/>
<g fill="#1c2e6c" stroke="none">
<circle cx="11" cy="3.8" r="1.7"/><circle cx="2.8" cy="14.4" r="1.6"/><circle cx="29.9" cy="12.2" r="1.5"/><circle cx="9.9" cy="36.2" r="1.5"/>
<circle cx="15" cy="17.6" r="0.9"/><circle cx="16.4" cy="19.2" r="0.9"/>
<path d="M18.5 5.6 Q23.2 6.6 24.2 11.2 Q19.6 10 18.5 5.6 Z"/><path d="M5.6 22.6 Q10 23.6 11 28 Q6.6 27 5.6 22.6 Z"/>
<path d="M13.2 3.6 Q16 2.4 18.6 4 Q15.6 5.2 13.2 3.6 Z"/><path d="M2.2 17.6 Q1.2 20.6 3 23 Q4 20 2.2 17.6 Z"/>
</g></g></g><g transform="translate(0 113) scale(1 -1)"><g fill="none" stroke="#22367a" stroke-width="1" stroke-linecap="round">
<path d="M13 4.2 C22 5.2 30 7.4 42 7.4"/>
<path d="M17.5 5.5 C23 8 27.5 8.5 29.8 10.2 C32.8 12.5 29.5 15 28.3 12.6"/>
<path d="M42 9 C39.5 8.6 36.5 9 35.8 10.8 C35.3 12.6 38.2 13 38 11.4"/>
<path d="M11 3.8 C7.5 0.8 3.2 3.8 4.6 7.6 C5.6 10.2 9.6 10.2 9.4 7.4"/>
<path d="M11.5 4.5 C13.5 8 11 11.5 7.5 11.8 C3.5 12 1.5 15 2.8 14.4"/>
<path d="M2.8 14.4 C0.8 18 3 22 4.8 25 C6.2 34 6.6 45 6.6 56.5" />
<path d="M4 12.5 C7 11.5 9.8 13.8 8.8 16.6 C8 18.6 5.4 18.2 5.8 16.4"/>
<path d="M15.4 23.6 C9.6 20.6 9.8 13.6 14.6 15.4 C15.6 12.4 21.6 13.4 20.2 18.4 C19.4 20.8 17.2 22.6 15.4 23.6 Z" stroke-width="1.2"/>
<path d="M9.9 36.2 C12.2 33.4 6.4 30.8 5.6 35.6 C5.2 39.6 8.8 40.6 9.2 43.2"/>
<path d="M6.6 47 C7.2 44.4 10.4 43.4 10.2 45 C10 46.4 8.4 46 8.6 45"/>
<g fill="#1c2e6c" stroke="none">
<circle cx="11" cy="3.8" r="1.7"/><circle cx="2.8" cy="14.4" r="1.6"/><circle cx="29.9" cy="12.2" r="1.5"/><circle cx="9.9" cy="36.2" r="1.5"/>
<circle cx="15" cy="17.6" r="0.9"/><circle cx="16.4" cy="19.2" r="0.9"/>
<path d="M18.5 5.6 Q23.2 6.6 24.2 11.2 Q19.6 10 18.5 5.6 Z"/><path d="M5.6 22.6 Q10 23.6 11 28 Q6.6 27 5.6 22.6 Z"/>
<path d="M13.2 3.6 Q16 2.4 18.6 4 Q15.6 5.2 13.2 3.6 Z"/><path d="M2.2 17.6 Q1.2 20.6 3 23 Q4 20 2.2 17.6 Z"/>
</g></g></g><g transform="translate(84 113) scale(-1 -1)"><g fill="none" stroke="#22367a" stroke-width="1" stroke-linecap="round">
<path d="M13 4.2 C22 5.2 30 7.4 42 7.4"/>
<path d="M17.5 5.5 C23 8 27.5 8.5 29.8 10.2 C32.8 12.5 29.5 15 28.3 12.6"/>
<path d="M42 9 C39.5 8.6 36.5 9 35.8 10.8 C35.3 12.6 38.2 13 38 11.4"/>
<path d="M11 3.8 C7.5 0.8 3.2 3.8 4.6 7.6 C5.6 10.2 9.6 10.2 9.4 7.4"/>
<path d="M11.5 4.5 C13.5 8 11 11.5 7.5 11.8 C3.5 12 1.5 15 2.8 14.4"/>
<path d="M2.8 14.4 C0.8 18 3 22 4.8 25 C6.2 34 6.6 45 6.6 56.5" />
<path d="M4 12.5 C7 11.5 9.8 13.8 8.8 16.6 C8 18.6 5.4 18.2 5.8 16.4"/>
<path d="M15.4 23.6 C9.6 20.6 9.8 13.6 14.6 15.4 C15.6 12.4 21.6 13.4 20.2 18.4 C19.4 20.8 17.2 22.6 15.4 23.6 Z" stroke-width="1.2"/>
<path d="M9.9 36.2 C12.2 33.4 6.4 30.8 5.6 35.6 C5.2 39.6 8.8 40.6 9.2 43.2"/>
<path d="M6.6 47 C7.2 44.4 10.4 43.4 10.2 45 C10 46.4 8.4 46 8.6 45"/>
<g fill="#1c2e6c" stroke="none">
<circle cx="11" cy="3.8" r="1.7"/><circle cx="2.8" cy="14.4" r="1.6"/><circle cx="29.9" cy="12.2" r="1.5"/><circle cx="9.9" cy="36.2" r="1.5"/>
<circle cx="15" cy="17.6" r="0.9"/><circle cx="16.4" cy="19.2" r="0.9"/>
<path d="M18.5 5.6 Q23.2 6.6 24.2 11.2 Q19.6 10 18.5 5.6 Z"/><path d="M5.6 22.6 Q10 23.6 11 28 Q6.6 27 5.6 22.6 Z"/>
<path d="M13.2 3.6 Q16 2.4 18.6 4 Q15.6 5.2 13.2 3.6 Z"/><path d="M2.2 17.6 Q1.2 20.6 3 23 Q4 20 2.2 17.6 Z"/>
</g></g></g>
</svg>
<div class="a" style="left:109px;top:817px;width:5px;height:113px;background:#f8f8f8"></div>
<div class="a dots" style="left:111px;top:869px;height:19px;background:repeating-linear-gradient(#a0a0a0 0 2px,transparent 2px 5.6px)"></div>
<div class="a" style="left:0;top:817px;width:938px;height:113px;overflow:hidden">
<div class="dl" style="top:8px">Authors:</div><div class="dv" style="top:8px">A B</div><div class="dv" style="top:25px">B C</div>
<div class="dl" style="top:44px">Series:</div><div class="dv" style="top:44px"><span style="color:#000">II of </span><i>Great Series</i></div>
<div class="dl" style="top:63px">Ids:</div><div class="dv" style="top:63px">191919</div>
<div class="dl" style="top:82px">Formats:</div><div class="dv" style="top:82px">EPUB</div>
<div class="dl" style="top:101px">Publisher:</div><div class="dv" style="top:101px">Publisher</div>
<div class="dv" style="left:446px;top:6px">The other book</div>
</div>
<div class="a" style="left:938px;top:817px;width:13px;height:113px;background:#e8e8e8"></div>
<div class="a" style="left:938px;top:817px;width:13px;height:14px;background:#fff"></div>
<div class="a" style="left:938px;top:831px;width:13px;height:27px;background:#fff;border:1px solid #d8d8d8"></div>
<div class="a" style="left:938px;top:917px;width:13px;height:13px;background:#fff"></div>
<div class="a" style="left:941px;top:822px;width:0;height:0;border-left:4px solid transparent;border-right:4px solid transparent;border-bottom:4px solid #555"></div>
<div class="arr" style="left:941px;top:922px"></div>

<div class="t" style="left:8px;top:937px">calibre 6.11* created by Kovid Goyal</div>
<div class="t" style="left:231px;top:937px">[6 of 89 books, 1 selected]</div>
<div class="sbtn" style="left:696px"><svg width="17" height="17" viewBox="0 0 17 17"><path d="M9.5 9.5 L15 15" stroke="#3b78d6" stroke-width="2.8" stroke-linecap="round"/><circle cx="6.3" cy="6.3" r="4.8" fill="#e8f2fc" stroke="#8fb0d8" stroke-width="1.4"/></svg></div>
<div class="sbtn" style="left:726px"><svg width="17" height="17" viewBox="0 0 20 20"><path d="M1.5 13.5 L11 4.5 L16.5 5 L17 9 L7.5 18.5 Z" fill="#fff" stroke="#111" stroke-width="1.8" stroke-linejoin="round"/><path d="M5.5 13.5 L12 7.5 L14 9.5 L7.7 15.6 Z" fill="#e08a3c"/><path d="M15.5 5.5 L18.5 2.5" stroke="#555" stroke-width="1"/></svg></div>
<div class="sbtn" style="left:756px"><svg width="17" height="17" viewBox="0 0 20 20"><path d="M5 1.5 H18 L14.5 17 H1.5 Z" fill="#b08d52"/><path d="M1.5 17 H14.5 L14.2 18.8 H1.8 Z" fill="#efe4c8"/><path d="M5 1.5 L1.5 17 L2.3 18.8 L5.8 3 Z" fill="#8a6a34"/><rect x="7.5" y="4.5" width="7" height="1.3" fill="#6a4e20"/><rect x="7" y="7" width="7" height="1.3" fill="#6a4e20"/></svg></div>
<div class="sbtn w" style="left:786px"><svg width="17" height="17" viewBox="0 0 17 17"><g fill="#2f6fe0"><rect x="1" y="1" width="4" height="4"/><rect x="6.5" y="1" width="4" height="4"/><rect x="12" y="1" width="4" height="4"/><rect x="1" y="6.5" width="4" height="4"/><rect x="6.5" y="6.5" width="4" height="4"/><rect x="12" y="6.5" width="4" height="4"/><rect x="1" y="12" width="4" height="4" fill="#6a9af0"/><rect x="6.5" y="12" width="4" height="4" fill="#6a9af0"/><rect x="12" y="12" width="4" height="4" fill="#6a9af0"/></g></svg></div>
<div class="sbtn w" style="left:816px"><svg width="17" height="17" viewBox="0 0 17 17"><g fill="#2f6fe0"><path d="M1 3.5 L4.5 4.5 V12.5 L1 13.5 Z"/><rect x="6.3" y="3.5" width="4.4" height="10"/><path d="M16 3.5 L12.5 4.5 V12.5 L16 13.5 Z"/></g></svg></div>
<div class="sbtn" style="left:846px"><svg width="17" height="17" viewBox="0 0 17 17"><path d="M0.8 8.5 C4 3.5 13 3.5 16.2 8.5 C13 13.5 4 13.5 0.8 8.5 Z" fill="#e8eefc" stroke="#26324a" stroke-width="1"/><circle cx="8.5" cy="8.5" r="4" fill="#2a40c8"/><circle cx="8.5" cy="8.5" r="1.8" fill="#080830"/></svg></div>
<div class="t" style="left:881px;top:937px">Jobs: 0</div>
<svg class="a" style="left:939px;top:946px" width="12" height="12"><g fill="#b8b8b8"><rect x="9" y="1" width="2" height="2"/><rect x="6" y="4" width="2" height="2"/><rect x="9" y="4" width="2" height="2"/><rect x="3" y="7" width="2" height="2"/><rect x="6" y="7" width="2" height="2"/><rect x="9" y="7" width="2" height="2"/></g></svg>

</body></html>
